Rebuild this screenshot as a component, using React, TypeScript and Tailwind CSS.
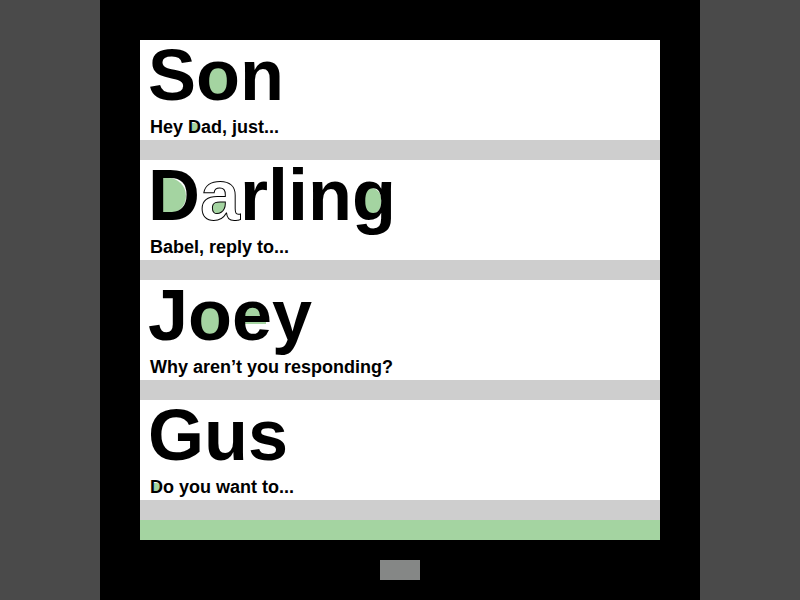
import React from 'react';

// A glyph with a green fill showing through its counter
const Hole = ({ ch, box, outline = false }: { ch: string; box: string; outline?: boolean }) => (
  <span className="relative inline-block">
    <span className={`absolute bg-[#a4d4a1] ${box}`} />
    <span className={outline ? 'relative text-white [-webkit-text-stroke:1px_black]' : 'relative'}>{ch}</span>
  </span>
);

const O_BOX = 'left-[10px] w-[24px] top-[27px] h-[30px] rounded-full';
const SMALL_D = 'left-[4px] w-[6px] top-[8px] h-[8px] rounded-r-full';

const Row = ({ title, sub }: { title: React.ReactNode; sub: React.ReactNode }) => (
  <div className="h-[100px] bg-white isolate">
    <div className="pl-2 text-[72px] leading-[70px] font-bold">{title}</div>
    <div className="mt-[5px] pl-[10px] text-[18px] leading-6 font-bold">{sub}</div>
  </div>
);

const Divider = () => <div className="h-5 bg-[#cecece]" />;

export default function App() {
  return (
    <div
      className="w-[800px] h-[600px] bg-[#4a4a4a] flex justify-center text-black"
      style={{ fontFamily: '"Liberation Sans", Arial, sans-serif' }}
    >
      <div className="w-[600px] h-[600px] bg-black pt-10 px-10 flex flex-col">
        <div className="w-[520px] h-[500px] flex flex-col">
          <Row
            title={<>S<Hole ch="o" box={O_BOX} />n</>}
            sub={<>Hey <Hole ch="D" box={SMALL_D} />ad, just...</>}
          />
          <Divider />
          <Row
            title={
              <>
                <Hole ch="D" box="left-[14px] w-[24px] top-[18px] h-[36px] rounded-r-[18px]" />
                <Hole ch="a" outline box="left-[8px] w-[20px] top-[40px] h-[18px] rounded-full" />
                rlin
                <Hole ch="g" box="left-[9px] w-[20px] top-[28px] h-[26px] rounded-full" />
              </>
            }
            sub="Babel, reply to..."
          />
          <Divider />
          <Row
            title={
              <>
                J<Hole ch="o" box={O_BOX} />
                <Hole ch="e" box="left-[8px] w-[26px] top-[25px] h-[19px] rounded-t-[13px]" />y
              </>
            }
            sub="Why aren’t you responding?"
          />
          <Divider />
          <Row
            title="Gus"
            sub={<><Hole ch="D" box={SMALL_D} />o you want to...</>}
          />
          <Divider />
          <div className="h-5 bg-[#a4d4a1]" />
        </div>
        <div className="mt-5 mx-auto w-10 h-5 bg-[#858786]" />
      </div>
    </div>
  );
}
